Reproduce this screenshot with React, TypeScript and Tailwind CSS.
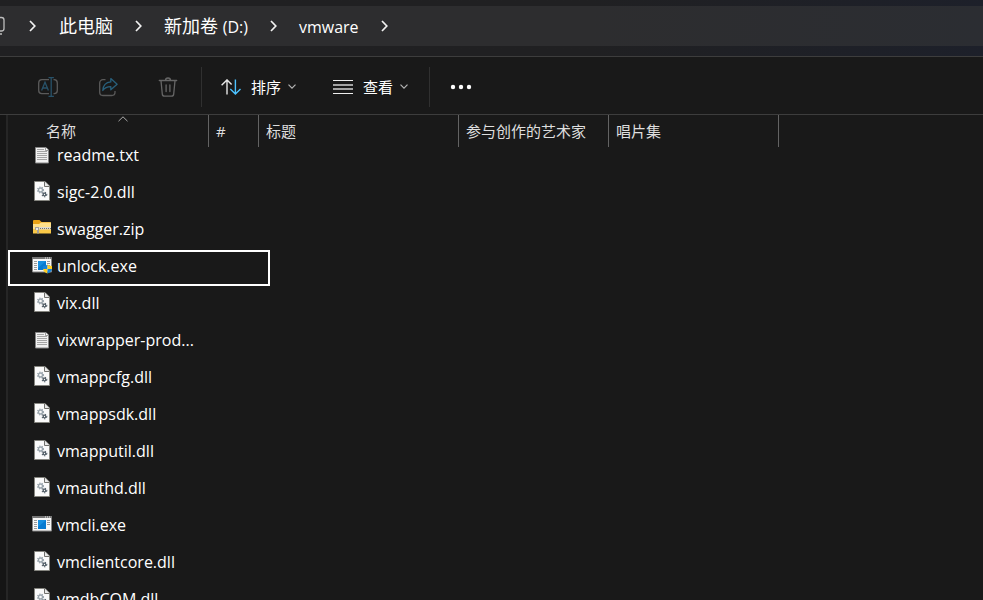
import type { ReactNode } from 'react';

type FileKind = 'text' | 'dll' | 'zip' | 'exe' | 'admin-exe';

const crumbs = [{ label: '此电脑' }, { label: '新加卷', suffix: '(D:)' }, { label: '', suffix: 'vmware' }];

const files: { name: string; kind: FileKind; selected?: boolean }[] = [
  { name: 'readme.txt', kind: 'text' },
  { name: 'sigc-2.0.dll', kind: 'dll' },
  { name: 'swagger.zip', kind: 'zip' },
  { name: 'unlock.exe', kind: 'admin-exe', selected: true },
  { name: 'vix.dll', kind: 'dll' },
  { name: 'vixwrapper-prod...', kind: 'text' },
  { name: 'vmappcfg.dll', kind: 'dll' },
  { name: 'vmappsdk.dll', kind: 'dll' },
  { name: 'vmapputil.dll', kind: 'dll' },
  { name: 'vmauthd.dll', kind: 'dll' },
  { name: 'vmcli.exe', kind: 'exe' },
  { name: 'vmclientcore.dll', kind: 'dll' },
  { name: 'vmdbCOM.dll', kind: 'dll' },
];

const columns = [
  { label: '#', width: 'w-[50px]' },
  { label: '标题', width: 'w-[200px]' },
  { label: '参与创作的艺术家', width: 'w-[150px]' },
  { label: '唱片集', width: 'w-[170px]' },
];

function Crumb({ children }: { children: ReactNode }) {
  return (
    <li className="flex items-center">
      <a href="#" className="text-lg leading-6 text-white whitespace-nowrap">
        {children}
      </a>
      <CrumbChevron className="mx-[22px]" />
    </li>
  );
}

function CrumbChevron({ className }: { className: string }) {
  return (
    <svg width="7" height="12" viewBox="0 0 7 12" className={`shrink-0 ${className}`} fill="none" stroke="#f2f2f2" strokeWidth="1.7">
      <path d="M1 1l4.800 5L1 11" />
    </svg>
  );
}

function SmallChevron() {
  return (
    <svg width="8" height="5" viewBox="0 0 8 5" fill="none" stroke="#b4b4b4" strokeWidth="1.2">
      <path d="M.5 .6L4 4.100 7.500 .6" />
    </svg>
  );
}

function RenameIcon() {
  return (
    <svg width="20" height="20" viewBox="0 0 20 20" fill="none" strokeWidth="1.3">
      <path d="M11 2.700H3.800A3.200 3.200 0 0 0 .7 5.900v7.600a3.200 3.200 0 0 0 3.100 3.200H11M15.500 2.700h.7a3.200 3.200 0 0 1 3.100 3.200v7.600a3.200 3.200 0 0 1-3.100 3.200h-.7" stroke="#5a5a5a" />
      <path d="M3.600 13.600L7 5.200l3.400 8.400M4.700 11h4.600M10.500.7h5.400M10.500 19.300h5.400M13.200.7v18.600" stroke="#285269" />
    </svg>
  );
}

function ShareIcon() {
  return (
    <svg width="20" height="20" viewBox="0 0 20 20" fill="none" strokeWidth="1.3" strokeLinejoin="round">
      <path d="M7.500 2.700H4.900A3.200 3.200 0 0 0 1.700 5.900v9.400a3.200 3.200 0 0 0 3.200 3.200h8.900a3.200 3.200 0 0 0 3.200-3.200V14" stroke="#5a5a5a" />
      <path d="M12.800 1.600l6.300 5.600-6.300 5.600V9.600c-3.700-.1-6.100 1.200-8 3.900.3-4.900 3.200-8.200 8-8.600z" stroke="#285f7b" />
    </svg>
  );
}

function TrashIcon() {
  return (
    <svg width="20" height="20" viewBox="0 0 20 20" fill="none" stroke="#666" strokeWidth="1.3" strokeLinecap="round">
      <path d="M1.300 3.500h17.400M7.500 3.500a2.500 2.500 0 0 1 5 0M3 3.700l1.300 13.400a2.200 2.200 0 0 0 2.200 2h7a2.200 2.200 0 0 0 2.200-2L17 3.700M8.100 8v6.500M11.900 8v6.500" />
    </svg>
  );
}

function SortIcon() {
  return (
    <svg width="20" height="16" viewBox="0 0 20 16" fill="none" strokeWidth="1.4">
      <path d="M6 15.500V1M.6 6.200L6 .9l4.600 4.600" stroke="#e6e6e6" />
      <path d="M14.400.5v14.300M9.300 9.900l5.100 5 5.100-5" stroke="#4cc2ff" />
    </svg>
  );
}

function ListIcon() {
  return (
    <svg width="20" height="14" viewBox="0 0 20 14">
      <path d="M0 0h20v1H0zM0 13h20v1H0z" fill="#ededed" />
      <path d="M0 4h20v2H0zM0 8h20v2H0z" fill="#a4a4a4" />
    </svg>
  );
}

function Gear({ x, y, r, color }: { x: number; y: number; r: number; color: string }) {
  return (
    <g stroke={color} fill="none">
      <circle cx={x} cy={y} r={r} strokeWidth="1.3" />
      <circle cx={x} cy={y} r={r + 1} strokeWidth="1.1" strokeDasharray="1.2 1.3" />
    </g>
  );
}

function FileIcon({ kind }: { kind: FileKind }) {
  if (kind === 'text') {
    return (
      <svg width="20" height="20" viewBox="0 0 20 20">
        <path d="M3.500 3.500h10.500L16.500 6v13h-13z" fill="#f1f1f1" stroke="#858585" />
        <path d="M13.500 3.500v3h3" fill="#fff" stroke="#858585" strokeWidth=".8" />
        <path d="M5 5.500h7M5 7.500h10M5 9.500h10M5 11.500h10M5 13.500h10M5 15.500h10" stroke="#a5a5a5" />
      </svg>
    );
  }
  if (kind === 'dll') {
    return (
      <svg width="20" height="20" viewBox="0 0 20 20">
        <path d="M2.500.5h10.500l4.500 4.500v14.500h-15z" fill="#fafafa" stroke="#85857f" />
        <path d="M12.500.5v5h5" fill="#e8e8e8" stroke="#70706c" />
        <Gear x={8.5} y={9} r={2} color="#9aa5ad" />
        <Gear x={12.5} y={13.5} r={1.3} color="#56616a" />
      </svg>
    );
  }
  if (kind === 'zip') {
    return (
      <svg width="20" height="20" viewBox="0 0 20 20">
        <path d="M1 3q0-1 1-1h5.500l2 2H18q1 0 1 1v3H1z" fill="#e9a216" />
        <path d="M1 6h6l2-1.500h10V11H1z" fill="#ffe08a" />
        <path d="M1 11h18v4.500H1z" fill="#f9c847" />
        <path d="M5 9h14v2.500H5z" fill="#dedbd0" />
        <path d="M6 10.500h13" stroke="#77746b" strokeDasharray="1 1" />
        <path d="M3 9h4v6.500H5V12H3z" fill="#a4a19a" />
        <path d="M4 10h2v2H4z" fill="#e9e8e3" />
      </svg>
    );
  }
  return (
    <svg width="20" height="20" viewBox="0 0 20 20">
      <path d="M.5 2.500h19v14.500H.5z" fill="#f8f8f8" stroke="#858585" />
      <path d="M0 2h20v2H0z" fill="#777" />
      <path d="M13 3h1M15 3h1M17 3h1" stroke="#eee" />
      <path d="M2 6.500h3M2 8.500h3M2 10.500h3M2 12.500h3M2 14.500h3M15 6.500h3M15 8.500h3M15 10.500h3" stroke="#9a9a9a" />
      <path d="M6 6h8v9H6z" fill="#087bd1" />
      <path d="M6 6h8L6 13z" fill="#178fe0" />
      {kind === 'admin-exe' && (
        <g>
          <path d="M11 11q2.500 0 4.500-1.500V14H11z" fill="#1683d8" />
          <path d="M15.500 9.500Q17.500 11 20 11v3h-4.500z" fill="#ffcf24" />
          <path d="M11 14h4.500v4.500Q11.500 17 11 14z" fill="#ffcf24" />
          <path d="M15.500 14H20q-.5 3-4.500 4.500z" fill="#1683d8" />
        </g>
      )}
    </svg>
  );
}

export default function App() {
  return (
    <div className="flex h-screen flex-col overflow-hidden bg-[#191919] font-['Open_Sans','Noto_Sans_CJK_SC',sans-serif] text-white">
      <header className="shrink-0 border-b border-[#3d3d3d] bg-linear-to-r from-[#202022] from-60% to-[#1d202a] pt-1.5 pb-2.5">
        <nav aria-label="路径" className="flex h-10 items-center bg-linear-to-r from-[#2d2d2f] from-60% to-[#2b2d32]">
          <svg width="5" height="20" viewBox="0 0 5 20" fill="none" stroke="#bdbdbd" strokeWidth="1.3" className="shrink-0">
            <path d="M0 1.500h1.500a2.500 2.500 0 0 1 2.500 2.500v8.500a2.500 2.500 0 0 1-2.500 2.500H0M0 18h2" />
          </svg>
          <CrumbChevron className="mr-[23px] ml-6" />
          <ol className="flex items-center">
            {crumbs.map((c) => (
              <Crumb key={c.label + c.suffix}>
                {c.label}
                {c.label && c.suffix ? ' ' : ''}
                {c.suffix && <span className="text-base">{c.suffix}</span>}
              </Crumb>
            ))}
          </ol>
        </nav>
      </header>

      <div role="toolbar" className="flex h-[58px] shrink-0 items-center border-b border-[#3d3d3d] pt-0.5 text-[15px] leading-5">
        <div className="flex h-10 items-center gap-10 border-r border-[#303030] pr-[23px] pl-[38px]">
          <button aria-label="重命名" disabled><RenameIcon /></button>
          <button aria-label="共享" disabled><ShareIcon /></button>
          <button aria-label="删除" disabled><TrashIcon /></button>
        </div>
        <div className="flex h-10 items-center gap-[37px] border-r border-[#303030] pr-[21px] pl-[19px]">
          <button className="flex items-center">
            <SortIcon />
            <span className="mr-[7px] ml-2.5">排序</span>
            <SmallChevron />
          </button>
          <button className="flex items-center">
            <ListIcon />
            <span className="mr-[7px] ml-2.5">查看</span>
            <SmallChevron />
          </button>
        </div>
        <button aria-label="更多" className="ml-5">
          <svg width="22" height="6" viewBox="0 0 22 6" fill="#fff">
            <circle cx="3" cy="3" r="2.200" />
            <circle cx="11" cy="3" r="2.200" />
            <circle cx="19" cy="3" r="2.200" />
          </svg>
        </button>
      </div>

      <main className="flex min-h-0 flex-1">
        <div className="w-2 shrink-0 border-r-2 border-[#262626] bg-[#151515]" />
        <div className="min-w-0 flex-1 overflow-hidden">
          <table className="w-full table-fixed border-collapse text-left">
            <thead className="text-[15px] leading-5 text-[#dedede]">
              <tr className="h-6">
                <th className="relative w-[200px] p-0 font-normal" aria-sort="ascending">
                  <svg width="10" height="6" viewBox="0 0 10 6" fill="none" stroke="#aaa" className="absolute top-px left-[110px]">
                    <path d="M.5 5.200L5 .8l4.500 4.400" />
                  </svg>
                  <div className="-mb-2 flex h-8 items-center pl-[38px]">名称</div>
                </th>
                {columns.map((col) => (
                  <th key={col.label} className={`${col.width} p-0 font-normal`}>
                    <div className="-mb-2 flex h-8 items-center border-l border-[#636363] pl-[7px] whitespace-nowrap">{col.label}</div>
                  </th>
                ))}
                <th className="p-0">
                  <div className="-mb-2 h-8 border-l border-[#636363]" />
                </th>
              </tr>
            </thead>
            <tbody className="text-base leading-[22px]">
              {files.map((file) => (
                <tr key={file.name} className="h-[37px]" aria-selected={file.selected}>
                  <td className="relative p-0">
                    {file.selected && <div className="absolute top-0 left-0 h-9 w-[262px] border-2 border-white" />}
                    <div className="flex items-start gap-[5px] pb-[5px] pl-6 whitespace-nowrap">
                      <FileIcon kind={file.kind} />
                      {file.name}
                    </div>
                  </td>
                  <td colSpan={5} className="p-0" />
                </tr>
              ))}
            </tbody>
          </table>
        </div>
      </main>
    </div>
  );
}
